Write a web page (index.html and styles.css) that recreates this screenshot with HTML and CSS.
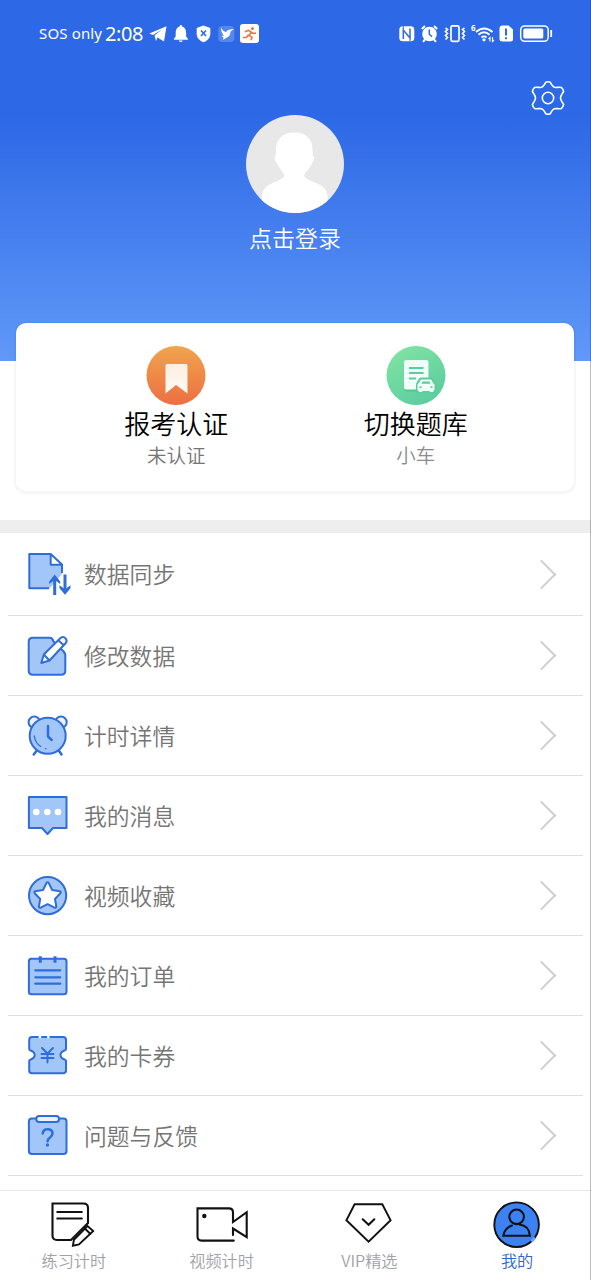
FILE: index.html
```html
<!DOCTYPE html>
<html lang="zh-CN">
<head>
<meta charset="utf-8">
<title>我的</title>
<link rel="stylesheet" href="styles.css">
</head>
<body>
<div class="app">
  <header class="header">
    <div class="status">
      <span class="carrier">SOS only</span>
      <span class="clock">2:08</span>
      <svg class="status-left" width="114" height="28" viewBox="0 0 114 28" fill="#fff">
        <path d="M1.3 13.6 18.5 6.3 16 21.5 9.500 17.500 8 21 6.500 15.500 14 9.500 5 15z"/>
        <path d="M7 15.500 14.500 9.500 9 17z"/>
        <path d="M32.800 5c.9 0 1.300.6 1.300 1.400 2.700.7 4 3 4 6v4l1.800 2.300v1H25.900v-1l1.800-2.300v-4c0-3 1.300-5.300 4-6C31.700 5.600 32 5 32.800 5zM30.800 20.500h4q-.5 1.600-2 1.600t-2-1.600z"/>
        <path d="M55.500 5.500 62.300 8v6c0 4-3 6.800-6.800 8.300-3.800-1.500-6.800-4.300-6.800-8.300V8z"/>
        <path d="m53 10.500 5 5.500m0-5.500-5 5.500" stroke="#2d69e6" stroke-width="1.600"/>
        <rect x="70.300" y="6" width="16" height="16" rx="4" fill="#5588ef"/>
        <path d="M73 7.500q2 4 5 4.500 1.500-2.500 4-2.500l4-.5-3.500 2.500q0 5-4.500 6.500l-3 2 .5-2.500-2-1.500 2.500-.5q-3-2.500-3-8z"/>
        <rect x="92" y="4" width="19" height="19" rx="3"/>
        <circle cx="104.500" cy="8.600" r="1.500" fill="#e8743c"/>
        <path d="m97 11.800 3.500-1.500 3 2-2.500 3 3 2-1 3m-2.500-5.500L98.500 17.500H95m8-5.500 2 1.500 3-.5" fill="none" stroke="#e8743c" stroke-width="1.600"/>
      </svg>
      <svg class="status-right" width="160" height="28" viewBox="0 0 160 28" fill="none" stroke="#fff">
        <rect x="3.300" y="6.200" width="15" height="15" rx="3.500" fill="#fff" stroke="none"/>
        <path d="M7.300 19V10l6.700 8V8.500" stroke="#2d69e6" stroke-width="1.500"/><path d="M7.300 6v3m6.700 9.500v3" stroke="#2d69e6" stroke-width="1"/>
        <circle cx="33.500" cy="14" r="7.300" fill="#fff" stroke="none"/>
        <path d="m25.800 9 3.200-3m9 0 3.200 3M29 19.500l-2 2.300m11-2.300 2 2.300" stroke-width="2"/>
        <path d="M33.300 9.500v4.700l2.700 2.500" stroke="#2d69e6" stroke-width="1.500"/>
        <rect x="55" y="5.800" width="8" height="15.500" rx="1.500" stroke-width="1.700"/>
        <path d="m49.500 8 2 1.500-2 2 2 2-2 2 2 2-2 2M68.500 8l-2 1.500 2 2-2 2 2 2-2 2 2 2" stroke-width="1.600"/>
        <text x="75" y="11" class="wifi-gen">6</text>
        <path d="M80 12q8-7 16.500 0M82.500 14.800q5.500-5 11 0" stroke-width="2"/>
        <path d="M85.500 17.500q2.500-2.300 5 0" stroke-width="1.800"/>
        <circle cx="88" cy="19.800" r="1.600" fill="#fff" stroke="none"/>
        <path d="M94 21.500v-4l-1.500 1.500m4-2v4.500l1.500-1.500" stroke-width="1.100"/>
        <path d="M106.500 5.500h6l4.500 4V19q0 2.500-2.500 2.500h-8Q103.500 21.500 103.500 19V8.500q0-3 3-3z" fill="#fff" stroke="none"/>
        <path d="M110 8.500v7m0 1.700v2" stroke="#2d69e6" stroke-width="2"/>
        <rect x="124.700" y="5.900" width="27.500" height="15.400" rx="4" stroke-width="1.500"/>
        <rect x="127.300" y="8.600" width="20" height="10" rx="1.500" fill="#fff" stroke="none"/>
        <path d="M155.200 10v7" stroke-width="1.800"/>
      </svg>
    </div>
    <div class="tools">
      <svg width="36" height="36" viewBox="0 0 36 36" fill="none" stroke="#fff" stroke-width="1.600" stroke-linejoin="round">
        <path d="M15.700 2.300q2.300-1 4.600 0c1.500 3 2.500 5.200 5.500 5.200 2-.1 4-.6 5.500-.1q1.800 1.500 2.300 4c-.8 2-3.100 3.600-3.100 6.600s2.300 4.600 3.100 6.600q-.5 2.500-2.300 4c-1.500.5-3.500 0-5.500-.1-3 0-4 2.200-5.500 5.200q-2.300 1-4.600 0c-1.500-3-2.500-5.200-5.500-5.200-2 .1-4 .6-5.500.1q-1.800-1.500-2.300-4c.8-2 3.100-3.600 3.100-6.600s-2.300-4.600-3.100-6.600q.5-2.500 2.300-4c1.500-.5 3.500 0 5.500.1 3 0 4-2.200 5.500-5.200z"/>
        <circle cx="18" cy="18" r="5.700"/>
      </svg>
    </div>
    <div class="profile">
      <svg width="98" height="98" viewBox="0 0 98 98">
        <clipPath id="face"><circle cx="49" cy="49" r="49"/></clipPath>
        <g clip-path="url(#face)">
          <path fill="#e8e8e8" d="M0 0h98v98H0z"/>
          <path fill="#fff" d="M48.500 17.500c12 0 18 7.500 18 17 0 3 .3 5 .5 7 3 1-.5 6-1.500 8-2 4-6 7-7.500 11 4 8 21.500 6 23.500 19.500V98H16V80c2-13.500 19-12 22.500-19.500-1.500-4-5-7-7-11-1-2-4.500-7-2-8 .4-2 .5-4 .5-7 0-9.500 6-17 18.500-17z"/>
        </g>
      </svg>
      <span class="login">点击登录</span>
    </div>
  </header>

  <section class="card">
    <div class="card-item">
      <svg width="60" height="60" viewBox="0 0 60 60">
        <defs>
          <linearGradient id="orange" x2="0" y2="1"><stop stop-color="#f0a44c"/><stop offset="1" stop-color="#ed6f43"/></linearGradient>
          <linearGradient id="cream" x2="0" y2="1"><stop stop-color="#fdeee1"/><stop offset="1" stop-color="#fffaf5"/></linearGradient>
        </defs>
        <circle cx="30" cy="29.500" r="29.500" fill="url(#orange)"/>
        <path d="M19.500 19.500q0-1.500 1.500-1.500h19q1.500 0 1.500 1.500v28L30 39l-10.500 8.500z" fill="url(#cream)"/>
      </svg>
      <span class="card-title">报考认证</span>
      <span class="card-note">未认证</span>
    </div>
    <div class="card-item">
      <svg width="60" height="60" viewBox="0 0 60 60">
        <defs><linearGradient id="green" x1=".2" x2=".8" y2="1"><stop stop-color="#80e3a2"/><stop offset="1" stop-color="#5acba0"/></linearGradient></defs>
        <circle cx="30" cy="29.500" r="29.500" fill="url(#green)"/>
        <rect x="18.500" y="16" width="24" height="29.500" rx="2.500" fill="#3cae83" opacity=".4"/>
        <rect x="18" y="14" width="24.500" height="29.500" rx="2.500" fill="#f0fff8"/>
        <path d="M23 22h14.500M23 27h14.500M23 32.500h7" stroke="#5dcc9f" stroke-width="2"/>
        <path d="m31.500 38 3-5h11.500l3 5v8H31.500z" fill="#f0fff8" stroke="#5dcc9f" stroke-width="3" stroke-linejoin="round"/>
        <path d="M35 34h10l2 4h1v6h-1v1.500h-3V44.500h-8v1h-3V44h-1v-6h1z" fill="#f0fff8" stroke="#f0fff8" stroke-linejoin="round"/>
        <path d="m35.500 37.800 1-2.300h7l1 2.300z" fill="#5dcc9f"/><path d="M33.500 41.200h2m9 0h2" stroke="#5dcc9f" stroke-width="1.800"/>
      </svg>
      <span class="card-title">切换题库</span>
      <span class="card-note light">小车</span>
    </div>
  </section>

  <nav class="menu">
    <a class="row first">
      <svg class="icon" viewBox="0 0 48 48">
        <path fill="#a3c6f9" stroke="none" d="M5.300 4h21.400v10.700H38V24L25.500 38.500H5.300z"/><path fill="#fff" stroke="none" d="M26.700 4 38 14.700H26.700z"/>
        <path fill="none" stroke-linecap="butt" d="M25 38.300H5.300V4h21.400L38 14.500V23M26.700 4v10.700H38"/>
        <path fill="none" stroke-width="3" stroke-linecap="butt" d="M30.700 45V28M41 24.500V42"/>
        <path fill="#306dd9" stroke="none" d="m30.700 24.500 5.500 7v2.500l-5.500-4-5.500 4v-2.500zM41 44.700l-5.500-6.500v-3l5.500 4 5.500-4v3z"/>
      </svg>
      <span class="label">数据同步</span><i class="arrow"></i>
    </a>
    <a class="row">
      <svg class="icon" viewBox="0 0 48 48">
        <path d="M26 5.700H9q-4.300 0-4.300 4v29q0 4 4.300 4h28q4.300 0 4.300-4V23q-.3-3-4-5.700L29.500 9.500q-1-3.800-3.500-3.800z"/>
        <path fill="#fff" d="m17.300 31 2.500-8.500L36.500 6q3-2 5 .3t.5 4.500L25.500 28.500zM34.500 8.500l5 4.500M19.800 22.500l5.700 6"/>
      </svg>
      <span class="label">修改数据</span><i class="arrow"></i>
    </a>
    <a class="row">
      <svg class="icon" viewBox="0 0 48 48">
        <g fill="#e9f2ff"><circle cx="10.300" cy="10.200" r="5.700"/><circle cx="37" cy="10.200" r="5.700"/></g>
        <path d="m13.300 38-3.600 4.500M34.500 38l3 4.500" stroke-width="2.500"/>
        <circle cx="23.700" cy="23.700" r="18"/>
        <path fill="none" d="M24 14v10.500l3.700 3.500" stroke-width="2.500"/><path fill="none" stroke-width="1.300" d="M10.300 24q.7 7 6.500 10.500M21.500 36.700h.5"/>
      </svg>
      <span class="label">计时详情</span><i class="arrow"></i>
    </a>
    <a class="row">
      <svg class="icon" viewBox="0 0 48 48">
        <path d="M4.900 4.900h37.600V36H29l-5.500 6-5.500-6H4.900z"/>
        <g fill="#fff" stroke="none"><circle cx="12.300" cy="20" r="3.300"/><circle cx="23.300" cy="20" r="3.300"/><circle cx="34" cy="20" r="3.300"/></g>
      </svg>
      <span class="label">我的消息</span><i class="arrow"></i>
    </a>
    <a class="row">
      <svg class="icon" viewBox="0 0 48 48">
        <circle cx="23.600" cy="23.600" r="18.600"/>
        <path fill="#fff" d="M22.500 11q1.100-1.500 2.200 0l3.500 7 7.500 1.200q1.800.5.700 2L31 27l1.300 7.500q0 1.800-1.800 1.200l-6.900-3.500-6.900 3.500q-1.800.6-1.800-1.200L16.200 27l-5.500-5.800q-1.100-1.500.7-2l7.600-1.200z"/>
      </svg>
      <span class="label">视频收藏</span><i class="arrow"></i>
    </a>
    <a class="row">
      <svg class="icon" viewBox="0 0 48 48">
        <rect x="4.900" y="6.700" width="37.600" height="35.600" rx="2.500"/>
        <path d="M16.300 4.300v6.500M31 4.300v6.500" stroke-width="3" stroke-linecap="butt"/><path d="M11.300 18.300h25M11.300 25.300h25M11.300 31.700h25" stroke-width="2.200"/>
      </svg>
      <span class="label">我的订单</span><i class="arrow"></i>
    </a>
    <a class="row">
      <svg class="icon" viewBox="0 0 48 48">
        <path d="M8 4.900h31q3 0 3 3V17q0 1-1.500 1.500-4 1.500-4 4.500t4 4.500q1.500.5 1.500 1.500v9.500q0 2.800-3 2.800H8q-2.800 0-2.800-2.800V29q0-1 1.500-1.500 4-1.500 4-4.500t-4-4.500Q5.200 18 5.200 17V7.900q0-3 2.800-3z"/>
        <path stroke="#fff" stroke-width="2.500" stroke-linecap="butt" d="M14.700 4.900h2.500m6 0h2.300"/>
        <path fill="none" stroke-width="1.900" d="m18 16 5.500 5.500L29 16m-5.500 5.500v9M17.500 22h12M17.500 26h12"/>
      </svg>
      <span class="label">我的卡券</span><i class="arrow"></i>
    </a>
    <a class="row">
      <svg class="icon" viewBox="0 0 48 48">
        <rect x="4.900" y="6.500" width="37.600" height="35.600" rx="3"/>
        <rect x="12.300" y="4" width="22.700" height="6" rx="2.800" fill="#e9f2ff"/>
        <path fill="none" stroke-width="2.500" d="M18.700 21.500q.5-4.300 5-4.300t4.800 4q0 2.500-2.700 4.500-2.200 1.500-2.200 3.500"/><circle cx="23.500" cy="33" r="1.700" fill="#306dd9" stroke="none"/>
      </svg>
      <span class="label">问题与反馈</span><i class="arrow"></i>
    </a>
  </nav>

  <footer class="tabs">
    <a class="tab">
      <svg width="54" height="48" viewBox="-3 0 54 48">
        <path d="M2.500 3.500h31q4.500 0 4.500 4.500v15L21 40H7q-4.500 0-4.500-4.500z"/>
        <path d="M7.300 12h24.500M7.300 18.500h24.500"/>
        <path d="m22.900 45.800 1-6L37.500 26l5.700 5L29 44.500zm12-17.300 5.500 5.500" stroke-width="1.900"/>
      </svg>
      <span>练习计时</span>
    </a>
    <a class="tab">
      <svg width="54" height="48" viewBox="0 0 54 48">
        <path d="M38.800 40.600H6.500q-4 0-4-4V8.400h31.300q4.200 0 4.200 4V22l13.700-9.800v25L38 28.500V35"/>
        <circle cx="9.300" cy="16" r="2.200" fill="#111" stroke="none"/>
      </svg>
      <span>视频计时</span>
    </a>
    <a class="tab">
      <svg width="54" height="48" viewBox="0 0 54 48">
        <path d="M12.600 4.300h27.700l8.300 16-22 21.300-22.200-21.300z" stroke-width="1.900"/>
        <path d="m20.700 19.300 5.900 5.500 5.700-5.500"/>
      </svg>
      <span>VIP精选</span>
    </a>
    <a class="tab active">
      <svg width="54" height="48" viewBox="0 0 54 48">
        <circle cx="26.600" cy="24.700" r="22.300" fill="#3c82f2" stroke-width="1.900"/>
        <path d="m42.300 40.500 1.700-1.800" stroke="#6ea2f6" stroke-width="3"/>
        <circle cx="26.600" cy="16.800" r="7.300"/>
        <path d="M22 25.500q-7.500 2.500-8.700 10.200h26.500q-.8-10.200-10.500-11.200"/>
      </svg>
      <span>我的</span>
    </a>
  </footer>
</div>
</body>
</html>
```
FILE: styles.css
```css
* { box-sizing: border-box; }

body {
  margin: 0;
  background: #fff;
  font-family: "Noto Sans CJK SC", sans-serif;
  font-weight: 350;
}

svg { display: block; flex: none; }

.app {
  position: relative;
  width: 591px;
  height: 1280px;
  display: flex;
  flex-direction: column;
  overflow: hidden;
}
/* hairline over the right screen edge */
.app::after {
  content: "";
  position: absolute;
  inset: 0 0 0 auto;
  width: 1px;
  background: rgba(60, 60, 60, 0.35);
}

.header {
  height: 361px;
  flex: none;
  background: linear-gradient(#2d68e6 0, #2d68e6 115px, #6099f8 361px);
  color: #fff;
}

.status {
  display: flex;
  align-items: center;
  height: 68px;
  padding: 0 35px 0 39px;
  font-family: "Noto Sans", sans-serif;
  font-weight: 400;
  white-space: nowrap;
}
.carrier { width: 66px; margin-top: -2px; font-size: 15px; letter-spacing: 0.15px; }
.clock { width: 43px; margin-top: -2px; font-size: 20px; letter-spacing: -0.4px; }
.status-right { margin-left: auto; }
.wifi-gen { font: 700 8px "Noto Sans", sans-serif; fill: #fff; stroke: none; }

.tools {
  display: flex;
  justify-content: flex-end;
  height: 47px;
  padding: 12px 25px 0 0;
}

.profile {
  display: flex;
  flex-direction: column;
  align-items: center;
  padding-right: 1px;
}
.login { margin-top: 7px; font-size: 23px; line-height: 34px; }

.card {
  display: flex;
  flex: none;
  height: 168px;
  margin: -38px 17px 29px 16px;
  padding: 23px 38px 0 40px;
  border-radius: 10px;
  background: #fff;
  box-shadow: 0 1px 0 2px rgba(0, 0, 0, 0.035);
}
.card-item {
  flex: 1;
  display: flex;
  flex-direction: column;
  align-items: center;
}
.card-item:last-child { margin-left: -1px; }
.card-title { margin-top: -1px; font-size: 26px; line-height: 36px; color: #000; }
.card-note { font-size: 19.500px; line-height: 28px; color: #757575; }
.card-note.light { color: #8c8c8c; }

.menu {
  display: flex;
  flex-direction: column;
  flex: none;
  border-top: 13px solid #eee;
}
.row {
  display: flex;
  align-items: center;
  height: 80px;
  margin: 0 8px;
  padding: 0 26px 0 16px;
  border-bottom: 1px solid #dedede;
}
.row.first { height: 83px; }
.icon {
  width: 48px;
  height: 48px;
  fill: #a3c6f9;
  stroke: #306dd9;
  stroke-width: 2;
  stroke-linecap: round;
  stroke-linejoin: round;
}
.label { flex: 1; margin-left: 12px; font-size: 22.800px; line-height: 34px; color: #757575; }
.arrow {
  width: 21px;
  height: 21px;
  margin-right: 5px;
  border: solid #cfcfcf;
  border-width: 2px 2px 0 0;
  transform: rotate(45deg);
}

.tabs {
  display: flex;
  flex: none;
  height: 90px;
  margin-top: 14px;
  padding-top: 9px;
  border-top: 1px solid #e6e6e6;
}
.tab {
  flex: 1;
  display: flex;
  flex-direction: column;
  align-items: center;
  font-size: 16.200px;
  line-height: 24px;
  color: #a0a2a8;
}
.tab svg { fill: none; stroke: #111; stroke-width: 2.100; stroke-linecap: round; }
.tab.active { color: #2c67d0; }
```
